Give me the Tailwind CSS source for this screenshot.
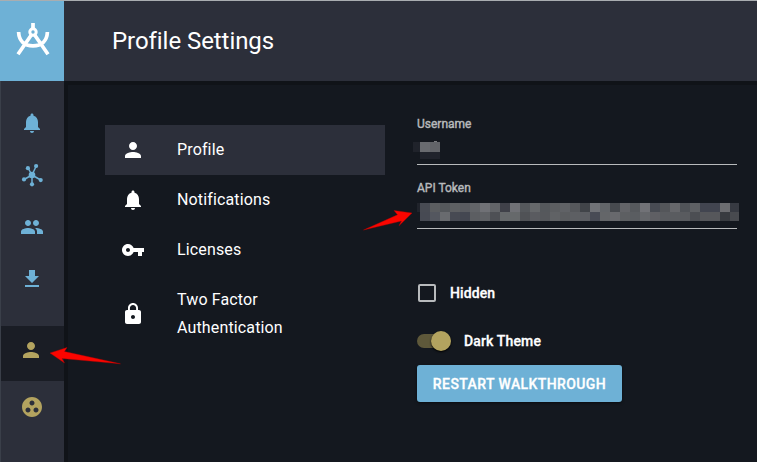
<!DOCTYPE html>
<html lang="en">
<head>
<meta charset="utf-8">
<title>Profile Settings</title>
<script src="https://cdn.jsdelivr.net/npm/@tailwindcss/browser@4"></script>
</head>
<body class="relative flex h-[462px] w-[757px] overflow-hidden border-t border-[#a9adb0] bg-[#14181f] font-[Roboto,sans-serif] text-white">
  <aside class="z-10 flex w-16 shrink-0 flex-col border-l border-[#3a3f49] bg-[#2c2f3a] text-[#6eb1d6]">
    <div class="-ml-px flex h-20 items-center justify-center bg-[#6eb1d6] pl-0.5">
      <svg class="h-9 w-9" viewBox="0 0 36 36" fill="none" stroke="#fff" stroke-width="3.7"><path d="M18 0v6M16.300 12 3 31.300M19.700 12 33 31.300M3.600 9C4 18 9.500 22.800 18 22.800S32 18 32.400 9"/><circle cx="18" cy="9" r="3.2" stroke-width="3"/></svg>
    </div>
    <nav class="-ml-px flex flex-col items-center pt-4">
      <div class="flex h-[52px] items-center"><svg class="h-6 w-6" viewBox="0 0 24 24" fill="currentColor"><path d="M12 22c1.100 0 2-.9 2-2h-4c0 1.100.89 2 2 2zm6-6v-5c0-3.070-1.640-5.640-4.500-6.320V4c0-.83-.67-1.500-1.500-1.500s-1.500.67-1.500 1.500v.68C7.630 5.360 6 7.920 6 11v5l-2 2v1h16v-1l-2-2z"/></svg></div>
      <div class="flex h-[52px] items-center"><svg class="h-6 w-6" viewBox="0 0 24 24" fill="currentColor" stroke="currentColor" stroke-width="1.500"><path d="M12 12 8 5M12 12 16 3.500M12 12 4 16.500M12 12 20.700 17M12 12v9"/><g stroke="none"><circle cx="12" cy="12" r="3.300"/><circle cx="7.900" cy="5.200" r="2.100"/><circle cx="16.100" cy="3" r="2.100"/><circle cx="4" cy="16.400" r="2.100"/><circle cx="20.700" cy="17.100" r="2.100"/><circle cx="12" cy="21.300" r="2.100"/></g></svg></div>
      <div class="flex h-[52px] items-center"><svg class="h-6 w-6" viewBox="0 0 24 24" fill="currentColor"><path d="M16 11c1.660 0 2.990-1.340 2.990-3S17.660 5 16 5s-3 1.340-3 3 1.340 3 3 3zm-8 0c1.660 0 2.990-1.340 2.990-3S9.660 5 8 5 5 6.340 5 8s1.340 3 3 3zm0 2c-2.330 0-7 1.170-7 3.500V19h14v-2.500c0-2.330-4.670-3.500-7-3.500zm8 0c-.29 0-.62.020-.97.050 1.160.84 1.970 1.970 1.970 3.450V19h6v-2.500c0-2.330-4.670-3.500-7-3.500z"/></svg></div>
      <div class="flex h-[52px] items-center"><svg class="h-6 w-6" viewBox="0 0 24 24" fill="currentColor"><path d="M19 9h-4V3H9v6H5l7 7 7-7zM5 18v2h14v-2H5z"/></svg></div>
    </nav>
    <div class="mt-[21px] flex h-[55px] items-center justify-center bg-[#1a1d25] pr-[3px] pb-[7px] text-[#b3a35f]"><svg class="h-6 w-6" viewBox="0 0 24 24" fill="currentColor"><path d="M12 12c2.210 0 4-1.790 4-4s-1.790-4-4-4-4 1.790-4 4 1.790 4 4 4zm0 2c-2.670 0-8 1.340-8 4v2h16v-2c0-2.660-5.330-4-8-4z"/></svg></div>
    <div class="-ml-px flex h-[52px] items-center justify-center text-[#b3a35f]"><svg class="h-6 w-6" viewBox="0 0 24 24" fill="currentColor"><path d="M12 2C6.480 2 2 6.480 2 12s4.480 10 10 10 10-4.480 10-10S17.520 2 12 2zM8 17.500c-1.380 0-2.500-1.120-2.500-2.500s1.120-2.500 2.500-2.500 2.500 1.120 2.500 2.500-1.120 2.500-2.500 2.500zM9.500 8c0-1.380 1.120-2.500 2.500-2.500s2.500 1.120 2.500 2.500-1.120 2.500-2.500 2.500S9.500 9.380 9.500 8zm6.500 9.500c-1.380 0-2.500-1.120-2.500-2.500s1.120-2.500 2.500-2.500 2.500 1.120 2.500 2.500-1.120 2.500-2.500 2.500z"/></svg></div>
  </aside>
  <div class="flex min-w-0 flex-1 flex-col shadow-[inset_4px_0_0_#101318]">
    <header class="flex h-20 shrink-0 items-center bg-[#2c2f3a] pl-12 shadow-[0_4px_0_#101318]"><h1 class="text-[24px] leading-8 tracking-[-0.06px]">Profile Settings</h1></header>
    <main class="flex">
      <ul class="mt-11 ml-[41px] w-[280px] text-base tracking-[0.14px]">
        <li class="flex h-[50px] items-center gap-8 bg-[#2c2f3a] pl-4"><svg class="h-6 w-6" viewBox="0 0 24 24" fill="currentColor"><path d="M12 12c2.210 0 4-1.790 4-4s-1.790-4-4-4-4 1.790-4 4 1.790 4 4 4zm0 2c-2.670 0-8 1.340-8 4v2h16v-2c0-2.660-5.330-4-8-4z"/></svg>Profile</li>
        <li class="flex h-[50px] items-center gap-8 pl-4"><svg class="h-6 w-6" viewBox="0 0 24 24" fill="currentColor"><path d="M12 22c1.100 0 2-.9 2-2h-4c0 1.100.89 2 2 2zm6-6v-5c0-3.070-1.640-5.640-4.500-6.320V4c0-.83-.67-1.500-1.500-1.500s-1.500.67-1.500 1.500v.68C7.630 5.360 6 7.920 6 11v5l-2 2v1h16v-1l-2-2z"/></svg>Notifications</li>
        <li class="flex h-[50px] items-center gap-8 pl-4"><svg class="h-6 w-6" viewBox="0 0 24 24" fill="currentColor"><path d="M12.650 10C11.830 7.670 9.610 6 7 6c-3.310 0-6 2.690-6 6s2.690 6 6 6c2.610 0 4.830-1.670 5.650-4H17v4h4v-4h2v-4H12.650zM7 14c-1.100 0-2-.9-2-2s.9-2 2-2 2 .9 2 2-.9 2-2 2z"/></svg>Licenses</li>
        <li class="flex h-[78px] items-center gap-8 pl-4 leading-7"><svg class="h-6 w-6" viewBox="0 0 24 24" fill="currentColor"><path d="M18 8h-1V6c0-2.760-2.240-5-5-5S7 3.240 7 6v2H6c-1.100 0-2 .9-2 2v10c0 1.100.9 2 2 2h12c1.100 0 2-.9 2-2V10c0-1.100-.9-2-2-2zm-6 9c-1.100 0-2-.9-2-2s.9-2 2-2 2 .9 2 2-.9 2-2 2zm3.100-9H8.900V6c0-1.710 1.390-3.100 3.100-3.100s3.100 1.390 3.100 3.100v2z"/></svg><span>Two Factor<br>Authentication</span></li>
      </ul>
      <section class="ml-8 w-80 pt-[35px]">
        <div class="h-[49px] border-b border-[#b8babc]">
          <div class="text-xs leading-4 text-[#b8babc] [-webkit-text-stroke:0.4px]">Username</div>
          <svg class="-ml-1 mt-[9px] block" width="28" height="18" shape-rendering="crispEdges"><path fill="#20232b" d="M0 1h7v10H0z"/><path fill="#696b70" d="M7 1h10v10H7z"/><path fill="#626469" d="M17 1h10v10H17z"/><path fill="#797b7f" d="M21 0h3v1h-3z"/><path fill="#20232c" d="M7 11h20v7H7z"/></svg>
        </div>
        <div class="h-16 border-b border-[#b8babc] pt-[15px]">
          <div class="text-xs leading-4 text-[#b8babc] [-webkit-text-stroke:0.4px]">API Token</div>
          <svg id="token" class="mt-[7px] block overflow-visible" width="322" height="18" shape-rendering="crispEdges"><path fill="#20232b" d="M0 0h3v9H0z"/></svg>
        </div>
        <label class="mt-[55px] ml-px flex h-[18px] items-center gap-[14px] text-sm font-medium tracking-[0.1px] [-webkit-text-stroke:0.3px]"><span class="h-[18px] w-[18px] rounded-[2px] border-2 border-[#b8babc]"></span>Hidden</label>
        <label class="mt-[29px] flex h-5 items-center gap-[13px] text-sm font-medium tracking-[0.15px] [-webkit-text-stroke:0.3px]">
          <span class="flex h-3.5 w-[34px] items-center justify-end rounded-full bg-[#5e583a]"><span class="h-5 w-5 shrink-0 rounded-full bg-[#b3a35f] shadow-[0_1px_2px_#000]"></span></span>Dark Theme</label>
        <button class="mt-[14px] block h-[37px] w-[205px] rounded-[3px] bg-[#6eb1d6] text-sm font-medium tracking-[0.4px] whitespace-nowrap shadow-[0_1px_3px_#0008] [-webkit-text-stroke:0.3px]">RESTART WALKTHROUGH</button>
      </section>
    </main>
  </div>
  <svg class="pointer-events-none absolute -top-px left-0 z-20" width="757" height="462" fill="#fb0500" stroke="#b80300" stroke-width="0.4">
    <path d="M50 353 67 347.500 64.500 351.500 120.500 363.800 62 358.500 64.500 363z"/>
    <path d="M412 213 394 210.500 397.500 214.800 363.500 230 401.500 221 399 225.800z"/>
  </svg>
  <script>
    const rows = [
      '484b53 5b5d60 55585c 5e6063 5a5c61 626468 707176 626468 404149 707176 55585c 66686b 55585c 5c5e61 606266 56585c 414449 707277 626569 474a4f 636468 56595d 717277 484b53 54565a 66676b 505358 5e6064 424550 424550 6c6d71 373a42',
      '474a53 54575f 696b6f 474a53 444751 5c5e62 606266 4e5055 66696b 66696b 505256 5a5b60 56585c 606265 5b5d60 5d5f63 5c5e63 484b55 646669 68696d 5d5f62 5a5d61 65676b 5f5f64 5a5c60 5a5c60 595b5f 4c4e53 56575b 56575b 383b40 484a4f'
    ];
    const svg = document.getElementById('token');
    rows.forEach((row, y) => row.split(' ').forEach((c, x) => {
      const r = document.createElementNS('http://www.w3.org/2000/svg', 'rect');
      r.setAttribute('x', 3 + x * 10);
      r.setAttribute('y', y * 9);
      r.setAttribute('width', x === 31 ? 9 : 10);
      r.setAttribute('height', 9);
      r.setAttribute('fill', '#' + c);
      r.setAttribute('stroke', 'none');
      svg.appendChild(r);
    }));
  </script>
</body>
</html>
